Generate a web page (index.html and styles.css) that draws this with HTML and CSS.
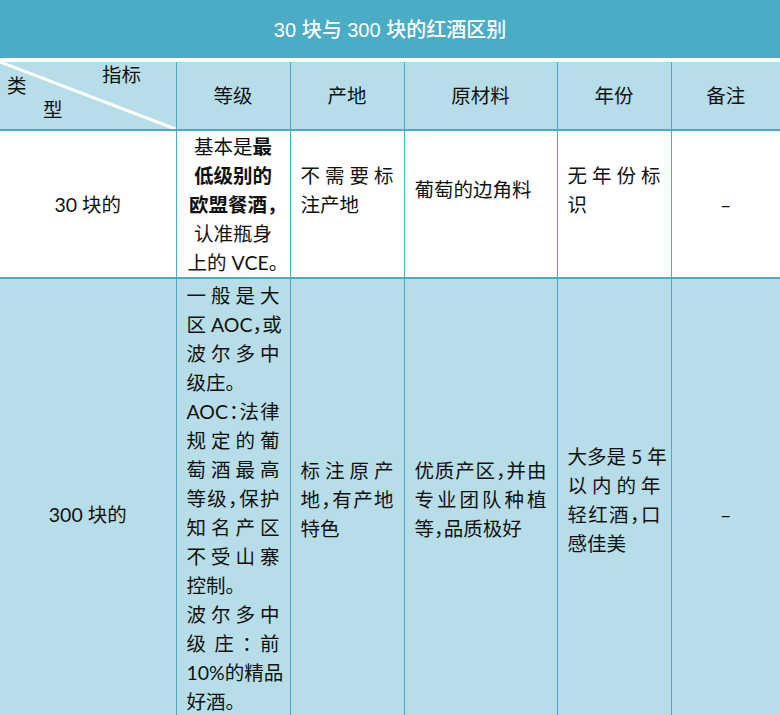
FILE: index.html
```html
<!DOCTYPE html>
<html lang="zh-CN">
<head>
<meta charset="utf-8">
<title>30块与300块的红酒区别</title>
<link rel="stylesheet" href="styles.css">
</head>
<body>
<div class="title">30 块与 300 块的红酒区别</div>
<table class="sheet">
  <colgroup>
    <col class="w1"><col class="w2"><col class="w3"><col class="w4"><col class="w5"><col class="w6">
  </colgroup>
  <thead>
    <tr class="head">
      <th class="diag-cell">
        <div class="diag">
          <svg class="slash" viewBox="0 0 176 67" preserveAspectRatio="none" aria-hidden="true">
            <line x1="0" y1="0" x2="176" y2="67" stroke="#ffffff" stroke-width="3"/>
          </svg>
          <span class="d-top">指标</span>
          <span class="d-left">类</span>
          <span class="d-bottom">型</span>
        </div>
      </th>
      <th>等级</th>
      <th>产地</th>
      <th>原材料</th>
      <th>年份</th>
      <th>备注</th>
    </tr>
  </thead>
  <tbody>
    <tr class="r1">
      <td class="name">30 块的</td>
      <td class="grade1">基本是<b>最</b><br><b>低级别的</b><br><b>欧盟餐酒，</b><br>认准瓶身<br>上的 VCE。</td>
      <td class="tail"><span class="jl">不需要标</span><span class="ll">注产地</span></td>
      <td class="tail"><span class="ll">葡萄的边角料</span></td>
      <td class="tail"><span class="jl">无年份标</span><span class="ll">识</span></td>
      <td class="dash">–</td>
    </tr>
    <tr class="r2">
      <td class="name">300 块的</td>
      <td class="top">
        <span class="jl">一般是大</span>
        <span class="jl">区 AOC，或</span>
        <span class="jl">波尔多中</span>
        <span class="ll">级庄。</span>
        <span class="jl">AOC：法律</span>
        <span class="jl">规定的葡</span>
        <span class="jl">萄酒最高</span>
        <span class="jl">等级，保护</span>
        <span class="jl">知名产区</span>
        <span class="jl">不受山寨</span>
        <span class="ll">控制。</span>
        <span class="jl">波尔多中</span>
        <span class="jl">级庄：前</span>
        <span class="jl">10%的精品</span>
        <span class="ll">好酒。</span>
      </td>
      <td class="tail"><span class="jl">标注原产</span><span class="jl">地，有产地</span><span class="ll">特色</span></td>
      <td class="tail"><span class="jl">优质产区，并由</span><span class="jl">专业团队种植</span><span class="ll">等，品质极好</span></td>
      <td class="tail"><span class="jl">大多是 5 年</span><span class="jl">以内的年</span><span class="jl">轻红酒，口</span><span class="ll">感佳美</span></td>
      <td class="dash">–</td>
    </tr>
  </tbody>
</table>
</body>
</html>
```
FILE: styles.css
```css
html, body {
  margin: 0;
  padding: 0;
  background: #ffffff;
}

body {
  font-family: "Lato", "Noto Sans CJK SC", sans-serif;
  color: #111111;
  overflow: hidden;
}

.title {
  height: 58px;
  margin-bottom: 4px;
  background: #4bacc6;
  color: #ffffff;
  font-family: "Liberation Sans Narrow", "Liberation Sans", "Noto Sans CJK SC", sans-serif;
  font-size: 20px;
  font-weight: 500;
  display: flex;
  align-items: center;
  justify-content: center;
  padding-bottom: 2px;
  box-sizing: border-box;
}

.sheet {
  width: 780px;
  border-collapse: collapse;
  table-layout: fixed;
  font-size: 19.5px;
  line-height: 29px;
  font-feature-settings: "halt";
}

.w1 { width: 176px; }
.w2 { width: 114px; }
.w3 { width: 114px; }
.w4 { width: 153px; }
.w5 { width: 114px; }
.w6 { width: 109px; }

.sheet th,
.sheet td {
  padding: 0 10px;
  border-left: 1px solid #4bacc6;
  border-top: 2px solid #4bacc6;
  vertical-align: middle;
  text-align: left;
  font-weight: normal;
}

.sheet th:first-child,
.sheet td:first-child {
  border-left: none;
}

.sheet th {
  border-top: none;
  padding: 0;
  text-align: center;
  background: #b7dee8;
  line-height: 24px;
}

.head {
  height: 67px;
}

.r1 {
  height: 148px;
}

.r2 {
  height: 471px;
}

.r1 td {
  background: #ffffff;
}

.r2 td {
  background: #b7dee8;
}

.sheet b {
  font-weight: 700;
}

.sheet td.name,
.sheet td.dash {
  text-align: center;
}

.sheet td.grade1 {
  text-align: center;
  padding: 0 4px;
}

.sheet td.tail {
  padding-bottom: 29px;
}

.sheet td.top {
  vertical-align: top;
  padding-top: 2px;
}

.jl,
.ll {
  display: block;
  white-space: nowrap;
}

.jl {
  text-align: justify;
  text-align-last: justify;
}

.ll {
  text-align: left;
}

/* diagonal header cell */
.diag-cell {
  position: relative;
}

.diag {
  position: relative;
  height: 67px;
  display: grid;
  grid-template-columns: 7px 36px 59px 1fr;
  grid-template-rows: 3px 11px 24px 1fr;
  line-height: 20px;
  text-align: left;
}

.slash {
  position: absolute;
  left: 0;
  top: 0;
  width: 100%;
  height: 100%;
}

.d-top {
  grid-column: 4;
  grid-row: 2 / span 2;
  align-self: start;
  justify-self: start;
}

.d-left {
  grid-column: 2;
  grid-row: 3;
  align-self: start;
  justify-self: start;
}

.d-bottom {
  grid-column: 3;
  grid-row: 4;
  align-self: start;
  justify-self: start;
}
```
